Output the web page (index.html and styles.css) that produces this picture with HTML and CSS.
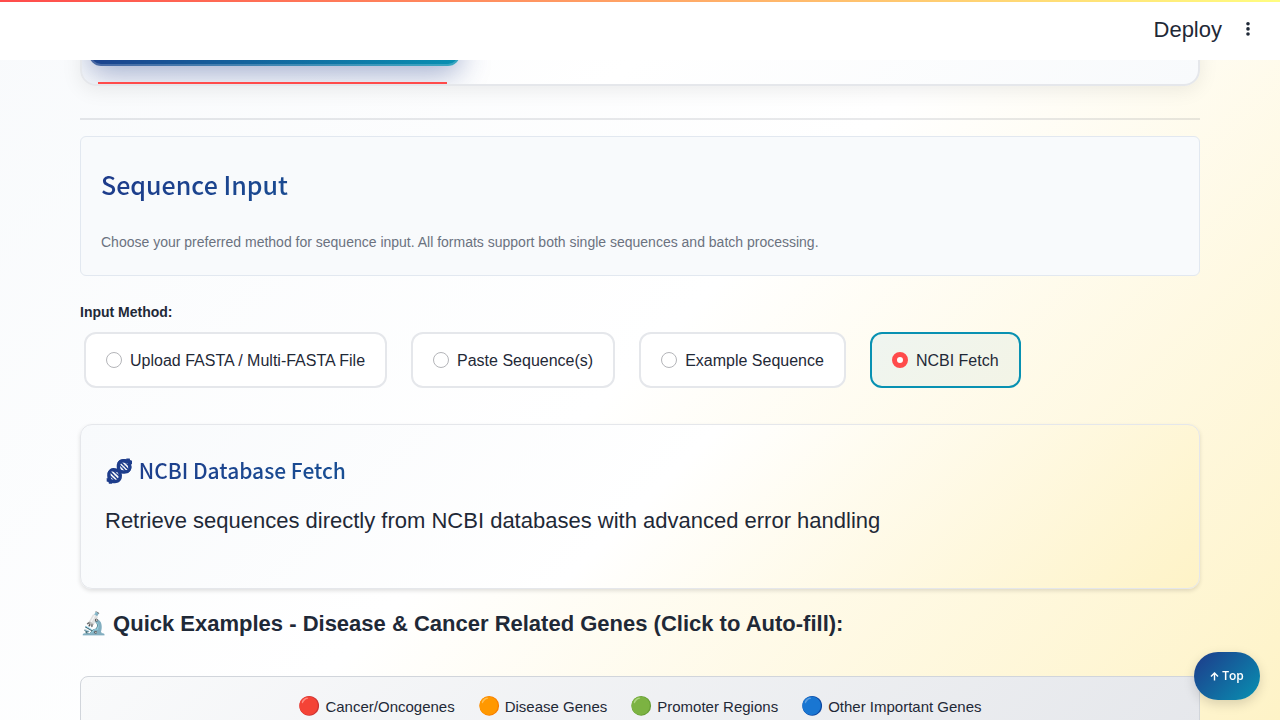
FILE: index.html
```html
<!DOCTYPE html>
<html lang="en">
<head>
<meta charset="utf-8">
<meta name="viewport" content="width=device-width, initial-scale=1">
<title>Sequence Input</title>
<link rel="stylesheet" href="styles.css">
</head>
<body>
<header class="topbar">
  <button class="deploy" type="button">Deploy</button>
  <button class="menu" type="button" aria-label="Main menu">
    <svg width="6" height="16" viewBox="0 0 6 16" fill="currentColor" aria-hidden="true"><circle cx="3" cy="1.8" r="1.8"/><circle cx="3" cy="6.9" r="1.8"/><circle cx="3" cy="12" r="1.8"/></svg>
  </button>
</header>
<main class="content">
  <div class="tabs-wrap">
    <nav class="tabs" aria-label="Sections"><button class="tab" type="button" aria-label="Current section"></button></nav>
    <span class="tab-line"></span>
  </div>
  <hr class="rule">
  <section class="intro">
    <h2 class="intro-title">Sequence Input</h2>
    <p class="intro-text">Choose your preferred method for sequence input. All formats support both single sequences and batch processing.</p>
  </section>
  <fieldset class="methods">
    <legend class="methods-label">Input Method:</legend>
    <div class="options">
      <label class="option"><input type="radio" name="method" class="radio">Upload FASTA / Multi-FASTA File</label>
      <label class="option"><input type="radio" name="method" class="radio">Paste Sequence(s)</label>
      <label class="option"><input type="radio" name="method" class="radio">Example Sequence</label>
      <label class="option option-on"><input type="radio" name="method" class="radio" checked>NCBI Fetch</label>
    </div>
  </fieldset>
  <section class="fetch">
    <h3 class="fetch-title"><span class="fetch-icon">🧬</span> NCBI Database Fetch</h3>
    <p class="fetch-text">Retrieve sequences directly from NCBI databases with advanced error handling</p>
  </section>
  <h4 class="examples-title">🔬 Quick Examples - Disease &amp; Cancer Related Genes (Click to Auto-fill):</h4>
  <ul class="key">
    <li class="key-item"><span class="dot">🔴</span> Cancer/Oncogenes</li>
    <li class="key-item"><span class="dot">🟠</span> Disease Genes</li>
    <li class="key-item"><span class="dot">🟢</span> Promoter Regions</li>
    <li class="key-item"><span class="dot">🔵</span> Other Important Genes</li>
  </ul>
</main>
<a class="to-top" href="#"><svg width="9" height="10" viewBox="0 0 9 10" fill="none" stroke="currentColor" stroke-width="1.4" aria-hidden="true"><path d="M4.500 9.500V1.600M1 5.500l3.500-3.500L8 5.500"/></svg>Top</a>
</body>
</html>
```
FILE: styles.css
```css
* { box-sizing: border-box; }
html { height: 100%; }
body {
  margin: 0;
  height: 100%;
  overflow: hidden;
  font-family: "Liberation Sans", Arial, sans-serif;
  color: #1f2937;
  background: linear-gradient(135deg, #f8fafc 0%, #ffffff 50%, #fef3c7 100%) fixed;
}
h2, h3, h4, p, ul { margin: 0; padding: 0; }
button { border: 0; padding: 0; background: none; font: inherit; color: inherit; }
.topbar {
  position: relative;
  z-index: 2;
  height: 60px;
  padding: 0 29px 0 16px;
  display: flex;
  align-items: center;
  justify-content: flex-end;
  gap: 23px;
  background: linear-gradient(90deg, #ff4b4b, #fffd80) top / 100% 2px no-repeat #ffffff;
}
.deploy { font-size: 22px; line-height: 32px; }
.menu { display: flex; }
.content { padding: 0 80px; margin-top: -40px; }
.tabs-wrap { position: relative; }
.tabs {
  height: 66px;
  padding: 0 7px;
  border: 2px solid #e5e7eb;
  border-radius: 16px;
  overflow: hidden;
  background: linear-gradient(135deg, #f8fafc 0%, #ffffff 50%, #f8fafc 100%);
  box-shadow: 0 4px 20px rgba(0, 0, 0, 0.08);
}
.tab {
  display: block;
  width: 371px;
  height: 44px;
  border: 2px solid rgba(255, 255, 255, 0.2);
  border-radius: 12px;
  background: linear-gradient(135deg, #1e3a8a, #0891b2) border-box;
  box-shadow: 0 8px 30px rgba(30, 58, 138, 0.4);
}
.tab-line {
  position: absolute;
  left: 18px;
  bottom: 2px;
  width: 349px;
  height: 2px;
  background: #ff4b4b;
}
.rule { margin: 32px 0 16px; border: 0; height: 2px; background: rgba(31, 41, 55, 0.1); }
.intro {
  height: 140px;
  padding: 29px 20px 0;
  background: #f8fafc;
  border: 1px solid #e2e8f0;
  border-radius: 6px;
}
.intro-title, .fetch-title {
  font-family: "Noto Sans CJK SC", sans-serif;
  font-weight: 500;
  color: transparent;
  background: linear-gradient(135deg, #1e3a8a, #0891b2);
  -webkit-background-clip: text;
  background-clip: text;
}
.intro-title { font-size: 25px; line-height: 36px; }
.intro-text { margin-top: 29px; font-size: 14px; line-height: 22px; color: #6b7280; }
.methods { margin: 26px 0 0; padding: 0; border: 0; }
.methods-label { padding: 0; font-size: 14px; line-height: 20px; font-weight: 700; }
.options { display: flex; flex-wrap: wrap; gap: 24px; padding: 10px 4px 0; }
.option {
  display: flex;
  align-items: center;
  gap: 8px;
  height: 56px;
  padding: 0 20px;
  font-size: 16px;
  line-height: 25px;
  background: #ffffff;
  border: 2px solid #e5e7eb;
  border-radius: 12px;
}
.option-on { border-color: #0891b2; background: linear-gradient(135deg, #eff5f0, #f3f4e6); }
.radio {
  appearance: none;
  width: 16px;
  height: 16px;
  margin: 0;
  border: 1px solid #b4b5b9;
  border-radius: 50%;
  background: #ffffff;
}
.radio:checked { border: 5px solid #ff4b4b; }
.fetch {
  margin-top: 36px;
  height: 165px;
  padding: 26px 24px 0;
  border: 1px solid #e5e7eb;
  border-radius: 12px;
  background: linear-gradient(135deg, #f8fafc 0%, #ffffff 50%, #fef3c7 100%);
  box-shadow: 0 2px 4px rgba(0, 0, 0, 0.12);
}
.fetch-title { font-size: 21px; line-height: 36px; }
.fetch-icon { font-size: 23px; }
.fetch-text { margin-top: 15px; font-size: 22px; line-height: 36px; }
.examples-title { margin-top: 17px; font-size: 22px; line-height: 36px; }
.key {
  margin-top: 34px;
  height: 80px;
  padding-top: 14px;
  display: flex;
  justify-content: center;
  gap: 23px;
  list-style: none;
  font-size: 15px;
  line-height: 31px;
  background: linear-gradient(135deg, #f9fafb, #e5e7eb);
  border: 1px solid #d1d5db;
  border-radius: 8px;
}
.key-item { display: flex; gap: 5px; }
.dot { font-size: 18px; line-height: 30px; }
.to-top {
  position: fixed;
  right: 20px;
  bottom: 20px;
  width: 66px;
  height: 48px;
  display: flex;
  align-items: center;
  justify-content: center;
  gap: 3px;
  border-radius: 24px;
  font: 600 12px/18px "Open Sans", sans-serif;
  text-decoration: none;
  color: #ffffff;
  background: linear-gradient(135deg, #1e3a8a, #0891b2);
  box-shadow: 0 4px 12px rgba(0, 0, 0, 0.15);
}
```
